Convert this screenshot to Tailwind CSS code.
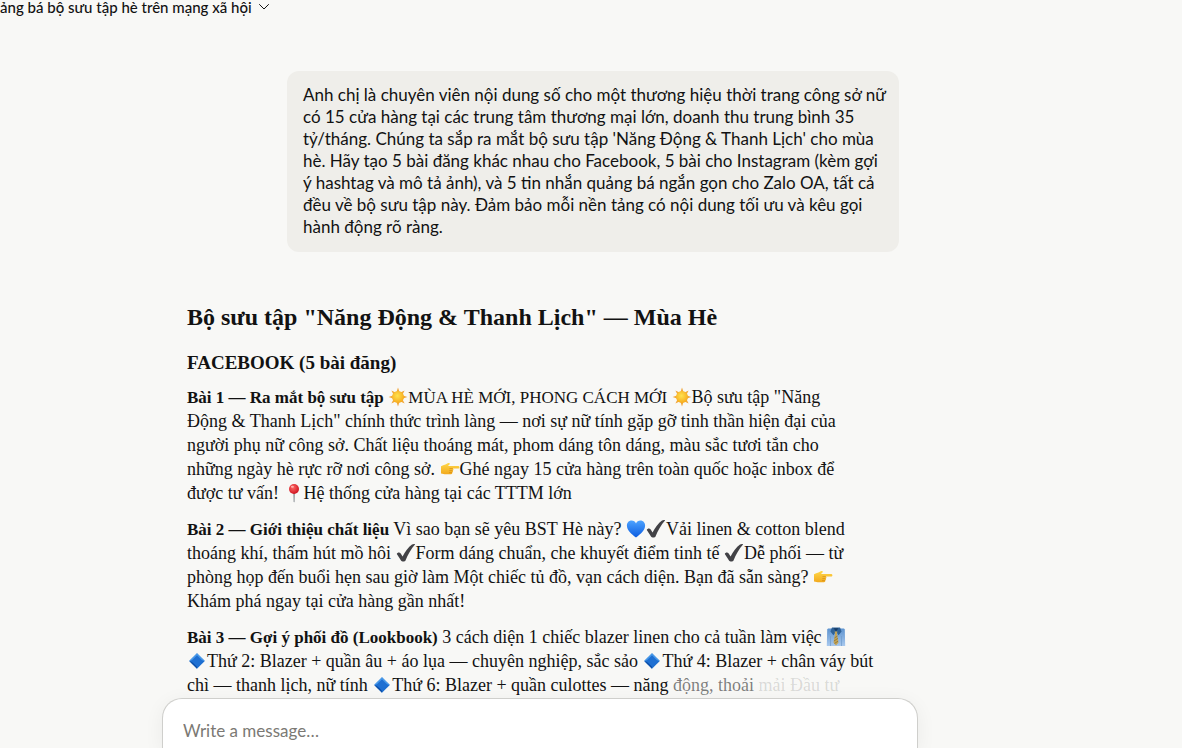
<!DOCTYPE html>
<html lang="vi">
<head>
    <meta charset="UTF-8">
    <meta name="viewport" content="width=device-width, initial-scale=1.0">
    <title>Quảng bá bộ sưu tập hè trên mạng xã hội</title>
    <script src="https://cdn.jsdelivr.net/npm/@tailwindcss/browser@4"></script>
</head>
<body class="bg-[#f8f8f6] text-[#121212] h-screen flex flex-col overflow-hidden font-['Lato','Noto_Sans',sans-serif]">
    <!-- Emoji sprites -->
    <svg class="absolute size-0" aria-hidden="true">
        <defs>
            <radialGradient id="gSun" cx=".45" cy=".4" r=".6"><stop offset="0" stop-color="#ffe14d"/><stop offset="1" stop-color="#f6ab1d"/></radialGradient>
            <linearGradient id="gHand" x1="0" y1="0" x2="0" y2="1"><stop offset="0" stop-color="#ffd84a"/><stop offset="1" stop-color="#f2a91c"/></linearGradient>
            <linearGradient id="gHeart" x1="0" y1="0" x2="0" y2="1"><stop offset="0" stop-color="#4da3ff"/><stop offset="1" stop-color="#0a5be0"/></linearGradient>
            <linearGradient id="gShirt" x1="0" y1="0" x2="0" y2="1"><stop offset="0" stop-color="#5d93cf"/><stop offset="1" stop-color="#a9c9ee"/></linearGradient>
            <radialGradient id="gPin" cx=".4" cy=".35" r=".65"><stop offset="0" stop-color="#ff6a66"/><stop offset="1" stop-color="#cf1420"/></radialGradient>
        </defs>
        <symbol id="sun" viewBox="0 0 20 20">
            <path fill="#f0a63a" d="M10 .6 11.5 5h-3zM10 19.4 8.5 15h3zM.6 10 5 8.5v3zM19.4 10 15 11.5v-3zM3.4 3.4l4.2 2-2.2 2.2zM16.6 16.6l-4.2-2 2.2-2.2zM3.4 16.6l2-4.2 2.2 2.2zM16.6 3.4l-2 4.2-2.2-2.2z"/>
            <circle cx="10" cy="10" r="6" fill="url(#gSun)"/>
        </symbol>
        <symbol id="point" viewBox="0 0 20 20">
            <path fill="url(#gHand)" d="M1 7.2C2.4 6.4 4 6 5.4 5.4c1.4-.8 2.4-1.5 3.6-1.5 1 .1 1.1 1.1.4 1.7L8 6.9h10c1.9 0 1.9 2.7 0 2.7h-5.2c1 .3.9 1.8-.2 2 .7.5.5 1.8-.5 2 .5.7 0 1.7-1.1 1.7H5.8c-1.7 0-2.8-.4-4.8-.7z"/>
            <path fill="none" stroke="#cf8413" stroke-width=".6" d="M12.8 9.6H9.5M12.6 11.6H9.3M12.1 13.6H9"/>
        </symbol>
        <symbol id="pin" viewBox="0 0 20 20">
            <path fill="#8d9297" d="M9.3 9h1.6l-.3 9.5-.5.9-.5-.9z"/>
            <circle cx="10" cy="6" r="5" fill="url(#gPin)"/>
            <ellipse cx="8.4" cy="3.8" rx="1.5" ry="1" fill="#ffb3ae"/>
        </symbol>
        <symbol id="heart" viewBox="0 0 20 20">
            <path fill="url(#gHeart)" d="M10 18.6C5.4 15 .9 11.4.9 6.6.9 3.7 2.9 1.5 5.5 1.5 7.6 1.5 9.3 2.7 10 4.6 10.7 2.7 12.4 1.5 14.5 1.5c2.6 0 4.6 2.2 4.6 5.1 0 4.8-4.5 8.4-9.1 12z"/>
        </symbol>
        <symbol id="check" viewBox="0 0 20 20">
            <path fill="#424246" d="M.8 11c.5-1.8 3-2 3.9-.5l1.9 3C9 9 12.3 4 16 1.5c.9-.6 3.2-.7 3 0-4 4.4-7 10-9.5 16-.6 1.4-3.7 1.4-4.5 0z"/>
        </symbol>
        <symbol id="diamond" viewBox="0 0 20 20">
            <path fill="#1d6fd0" d="M10 2.2 17.8 10 10 17.8 2.2 10z"/>
            <path fill="#4a9bea" d="M10 2.2 17.8 10 10 8.5 2.2 10z"/>
            <path fill="#0d4fa8" d="M10 17.8 2.2 10 10 13z"/>
            <path fill="#1f70d2" d="M10 4.2 15.8 10 10 15.8 4.2 10z"/>
        </symbol>
        <symbol id="shirt" viewBox="0 0 20 20">
            <path fill="url(#gShirt)" d="M2 1.5h16l.8 1 .4 16.5H.8l.4-16.5z"/>
            <path fill="#2f6298" d="M6 .6h8l1.6 4-3 3.6L10 4.6 7.4 8.2l-3-3.6z"/>
            <path fill="#173c66" d="M7.5 1.2h5L10 4.6z"/>
            <path fill="#c5a556" d="M8.6 4.4h2.8l-.5 2.4 1.6 8.7-2.5 3-2.5-3 1.6-8.7z"/>
            <path stroke="#806a34" stroke-width=".7" d="m8.5 11 3-2M8 14l4-2.7M8.5 16.5l3.6-2.4"/>
            <path stroke="#6f9bcc" stroke-width=".7" d="M4.5 9v10M15.5 9v10"/>
        </symbol>
    </svg>

    <header class="shrink-0 h-[50px]">
        <button type="button" class="flex items-center gap-1 h-3.5 text-[15px] font-medium leading-[14px] whitespace-nowrap">
            ảng bá bộ sưu tập hè trên mạng xã hội
            <svg class="size-4" viewBox="0 0 16 16" fill="none" stroke="currentColor" stroke-linecap="round" stroke-linejoin="round" aria-hidden="true"><path d="m3.5 5.5 4.5 4.5 4.5-4.5"/></svg>
        </button>
    </header>

    <main class="flex-1 min-h-0 overflow-hidden pl-[187px] pr-[283px] pt-[21px]">
        <!-- User message -->
        <div class="ml-[100px] rounded-xl bg-[#efeeea] px-4 pt-[13px] pb-3.5 text-[17px] leading-[22px] whitespace-nowrap">
            <p>Anh chị là chuyên viên nội dung số cho một thương hiệu thời trang công sở nữ<br>
            có 15 cửa hàng tại các trung tâm thương mại lớn, doanh thu trung bình 35<br>
            tỷ/tháng. Chúng ta sắp ra mắt bộ sưu tập 'Năng Động &amp; Thanh Lịch' cho mùa<br>
            hè. Hãy tạo 5 bài đăng khác nhau cho Facebook, 5 bài cho Instagram (kèm gợi<br>
            ý hashtag và mô tả ảnh), và 5 tin nhắn quảng bá ngắn gọn cho Zalo OA, tất cả<br>
            đều về bộ sưu tập này. Đảm bảo mỗi nền tảng có nội dung tối ưu và kêu gọi<br>
            hành động rõ ràng.</p>
        </div>

        <!-- Reply -->
        <article class="mt-[49px] font-['Liberation_Serif',serif] text-[18px] leading-6 whitespace-nowrap">
            <h1 class="text-2xl leading-8 font-bold">Bộ sưu tập "Năng Động &amp; Thanh Lịch" — Mùa Hè</h1>
            <h2 class="mt-[14px] text-[19px] leading-8 font-bold">FACEBOOK (5 bài đăng)</h2>
            <div class="mt-1.5 flex flex-col gap-3">
                <p><strong class="text-[17px] leading-5">Bài 1 — Ra mắt bộ sưu tập</strong> <svg class="inline size-5 align-[-4px]" role="img" aria-label="☀️"><use href="#sun"/></svg><span class="text-[17px] leading-5">MÙA HÈ MỚI, PHONG CÁCH MỚI</span> <svg class="inline size-5 align-[-4px]" role="img" aria-label="☀️"><use href="#sun"/></svg>Bộ sưu tập "Năng<br>
                Động &amp; Thanh Lịch" chính thức trình làng — nơi sự nữ tính gặp gỡ tinh thần hiện đại của<br>
                người phụ nữ công sở. Chất liệu thoáng mát, phom dáng tôn dáng, màu sắc tươi tắn cho<br>
                những ngày hè rực rỡ nơi công sở. <svg class="inline size-5 align-[-4px]" role="img" aria-label="👉"><use href="#point"/></svg>Ghé ngay 15 cửa hàng trên toàn quốc hoặc inbox để<br>
                được tư vấn! <svg class="inline size-5 align-[-4px]" role="img" aria-label="📍"><use href="#pin"/></svg>Hệ thống cửa hàng tại các TTTM lớn</p>
                <p><strong class="text-[17px] leading-5">Bài 2 — Giới thiệu chất liệu</strong> Vì sao bạn sẽ yêu BST Hè này? <svg class="inline size-5 align-[-4px]" role="img" aria-label="💙"><use href="#heart"/></svg><svg class="inline size-5 align-[-4px]" role="img" aria-label="✔️"><use href="#check"/></svg>Vải linen &amp; cotton blend<br>
                thoáng khí, thấm hút mồ hôi <svg class="inline size-5 align-[-4px]" role="img" aria-label="✔️"><use href="#check"/></svg>Form dáng chuẩn, che khuyết điểm tinh tế <svg class="inline size-5 align-[-4px]" role="img" aria-label="✔️"><use href="#check"/></svg>Dễ phối — từ<br>
                phòng họp đến buổi hẹn sau giờ làm Một chiếc tủ đồ, vạn cách diện. Bạn đã sẵn sàng? <svg class="inline size-5 align-[-4px]" role="img" aria-label="👉"><use href="#point"/></svg><br>
                Khám phá ngay tại cửa hàng gần nhất!</p>
                <p><strong class="text-[17px] leading-5">Bài 3 — Gợi ý phối đồ (Lookbook)</strong> 3 cách diện 1 chiếc blazer linen cho cả tuần làm việc <svg class="inline size-5 align-[-4px]" role="img" aria-label="👔"><use href="#shirt"/></svg><br>
                <svg class="inline size-5 align-[-4px]" role="img" aria-label="🔷"><use href="#diamond"/></svg>Thứ 2: Blazer + quần âu + áo lụa — chuyên nghiệp, sắc sảo <svg class="inline size-5 align-[-4px]" role="img" aria-label="🔷"><use href="#diamond"/></svg>Thứ 4: Blazer + chân váy bút<br>
                chì — thanh lịch, nữ tính <svg class="inline size-5 align-[-4px]" role="img" aria-label="🔷"><use href="#diamond"/></svg>Thứ 6: Blazer + quần culottes — năng <span class="text-[#121212]/55">động, thoải</span> <span class="text-[#121212]/15">mải Đầu tư</span></p>
            </div>
        </article>
    </main>

    <!-- Composer -->
    <form class="shrink-0 h-[50px] ml-[162px] mr-[264px] rounded-t-[20px] border border-b-0 border-[#cfcfcc] bg-white px-5 pt-5 shadow-[0_4px_20px_rgba(0,0,0,0.06)]">
        <input type="text" aria-label="Write a message" placeholder="Write a message…" class="block w-full h-6 text-[17px] leading-6 outline-none placeholder:text-[#7b7974]">
    </form>
</body>
</html>
